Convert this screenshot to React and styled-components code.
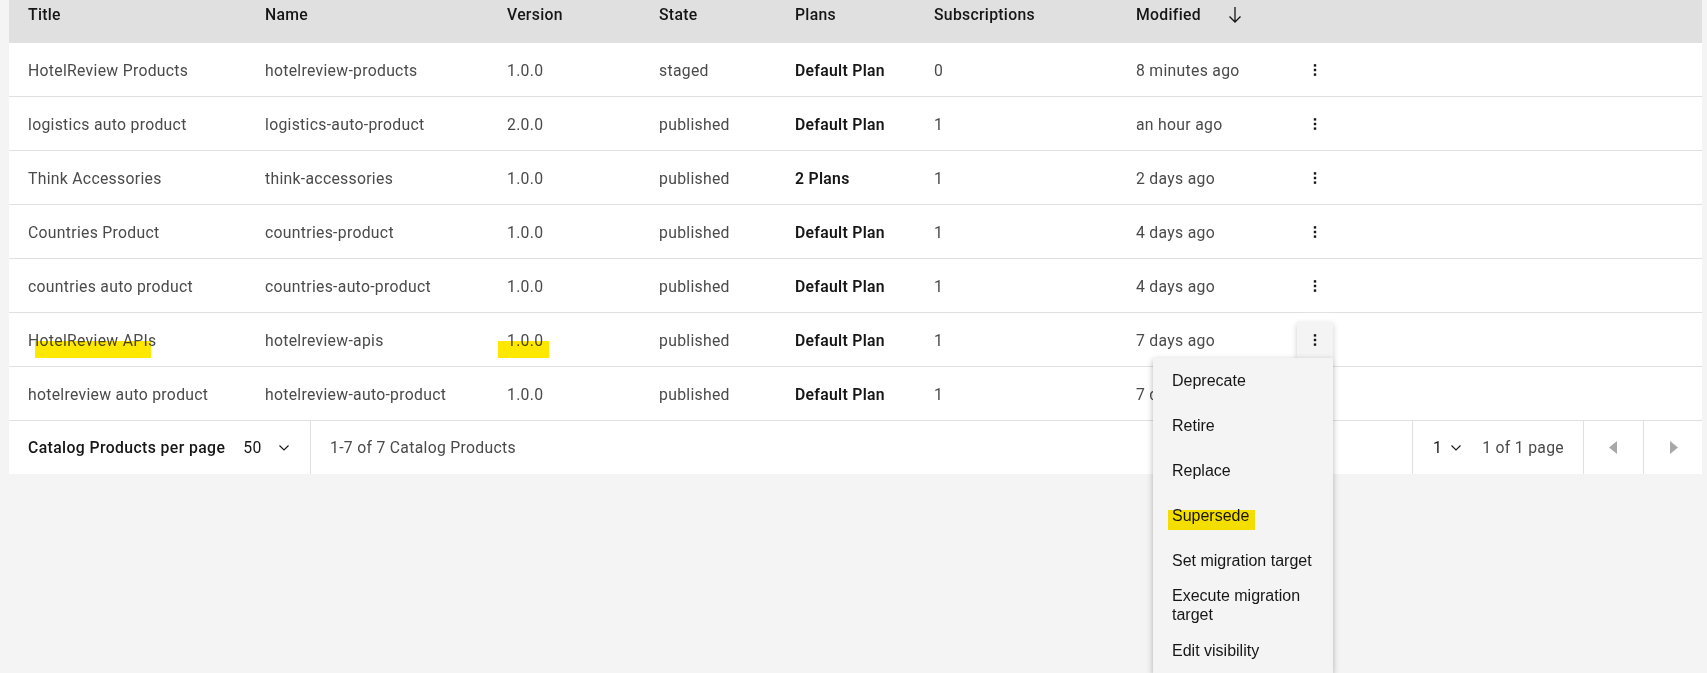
import React from 'react';
import styled, { createGlobalStyle } from 'styled-components';

const GlobalStyle = createGlobalStyle`
  html, body {
    margin: 0;
    padding: 0;
    background: #f4f4f4;
  }
  * { box-sizing: border-box; }
`;

const COLS = '237px 242px 152px 136px 139px 202px 180px 36px 1fr';

const products = [
  { title: 'HotelReview Products', name: 'hotelreview-products', version: '1.0.0', state: 'staged', plans: 'Default Plan', subs: '0', modified: '8 minutes ago' },
  { title: 'logistics auto product', name: 'logistics-auto-product', version: '2.0.0', state: 'published', plans: 'Default Plan', subs: '1', modified: 'an hour ago' },
  { title: 'Think Accessories', name: 'think-accessories', version: '1.0.0', state: 'published', plans: '2 Plans', subs: '1', modified: '2 days ago' },
  { title: 'Countries Product', name: 'countries-product', version: '1.0.0', state: 'published', plans: 'Default Plan', subs: '1', modified: '4 days ago' },
  { title: 'countries auto product', name: 'countries-auto-product', version: '1.0.0', state: 'published', plans: 'Default Plan', subs: '1', modified: '4 days ago' },
  { title: 'HotelReview APIs', name: 'hotelreview-apis', version: '1.0.0', state: 'published', plans: 'Default Plan', subs: '1', modified: '7 days ago', open: true },
  { title: 'hotelreview auto product', name: 'hotelreview-auto-product', version: '1.0.0', state: 'published', plans: 'Default Plan', subs: '1', modified: '7 days ago' },
];

const menuItems = ['Deprecate', 'Retire', 'Replace', 'Supersede', 'Set migration target', 'Execute migration target', 'Edit visibility'];

const Page = styled.div`
  min-height: 100vh;
  background: #f4f4f4;
  padding: 0 5px 0 9px;
  font-family: Roboto, "Noto Sans", sans-serif;
  font-size: 15.75px;
  letter-spacing: 0.3px;
`;

const Table = styled.div`
  background: #fff;
`;

const HeadRow = styled.div`
  display: grid;
  grid-template-columns: ${COLS};
  height: 42px;
  background: #e0e0e0;
`;

const HeadCell = styled.div`
  padding: 5px 0 0 19px;
  line-height: 20px;
  font-weight: 500;
  color: #161616;
  display: flex;
  gap: 26px;
`;

const Row = styled.div`
  display: grid;
  grid-template-columns: ${COLS};
  height: 54px;
  border-top: 1px solid #e0e0e0;
  align-items: center;
`;

const Cell = styled.div`
  padding-left: 19px;
  padding-top: 2px;
  line-height: 20px;
  color: ${p => (p.$bold ? '#161616' : '#4a4a4a')};
  font-weight: ${p => (p.$bold ? 600 : 400)};
  white-space: nowrap;
`;

const Marked = styled.span`
  position: relative;
  display: inline-block;
`;

const Highlight = styled.span`
  position: absolute;
  left: ${p => p.$left}px;
  top: ${p => p.$top}px;
  width: ${p => p.$width}px;
  height: ${p => p.$height}px;
  background: #ffe800;
  mix-blend-mode: multiply;
  pointer-events: none;
`;

const ActionCell = styled.div`
  position: relative;
  height: 36px;
`;

const Kebab = styled.button`
  width: 36px;
  height: 36px;
  border: 0;
  padding: 0;
  display: flex;
  align-items: center;
  justify-content: center;
  background: ${p => (p.$open ? '#f4f4f4' : 'transparent')};
  box-shadow: ${p => (p.$open ? '0 2px 6px rgba(0,0,0,0.2)' : 'none')};
  cursor: pointer;
`;

const Menu = styled.ul`
  position: absolute;
  z-index: 10;
  top: 36px;
  right: 0;
  width: 180px;
  margin: 0;
  padding: 0;
  list-style: none;
  background: #f4f4f4;
  box-shadow: 0 2px 6px rgba(0, 0, 0, 0.3);
  font-family: "Liberation Sans", Arial, sans-serif;
  font-size: 16px;
  letter-spacing: 0;
  color: #161616;
`;

const MenuItem = styled.li`
  height: 45px;
  display: flex;
  align-items: center;
  padding: 0 18px 0 19px;
  line-height: 19px;
`;

const Footer = styled.div`
  display: flex;
  align-items: stretch;
  height: 54px;
  border-top: 1px solid #e0e0e0;
  background: #fff;
  color: #161616;
  white-space: nowrap;
`;

const PerPage = styled.div`
  display: flex;
  align-items: center;
  padding-left: 19px;
  width: 302px;
  border-right: 1px solid #e0e0e0;
`;

const PerPageLabel = styled.span`
  font-weight: 500;
  letter-spacing: 0.4px;
  margin-right: 18px;
`;

const SelectValue = styled.span`
  display: flex;
  align-items: center;
  gap: ${p => p.$gap}px;
`;

const Range = styled.div`
  flex: 1;
  display: flex;
  align-items: center;
  padding-left: 19px;
  color: #4a4a4a;
`;

const PageSelect = styled.div`
  flex-shrink: 0;
  display: flex;
  align-items: center;
  border-left: 1px solid #e0e0e0;
  padding: 0 19px 0 20px;
`;

const PageInfo = styled.span`
  color: #4a4a4a;
  margin-left: 20px;
`;

const NavButton = styled.div`
  flex-shrink: 0;
  width: ${p => p.$w}px;
  border-left: 1px solid #e0e0e0;
  display: flex;
  align-items: center;
  justify-content: center;
`;

const Chevron = () => (
  <svg width="12" height="8" viewBox="0 0 12 8">
    <path d="M1.5 1.5 L6 6 L10.5 1.5" fill="none" stroke="#161616" strokeWidth="1.1" />
  </svg>
);

const Caret = ({ dir }) => (
  <svg width="9" height="13" viewBox="0 0 9 13">
    <path d={dir === 'left' ? 'M8 0 L0 6.5 L8 13 Z' : 'M1 0 L9 6.5 L1 13 Z'} fill="#a8a8a8" />
  </svg>
);

const SortArrow = () => (
  <svg width="16" height="18" viewBox="0 0 16 18" style={{ marginTop: 1 }}>
    <path d="M8 1 V16 M2.5 10.5 L8 16 L13.5 10.5" fill="none" stroke="#161616" strokeWidth="1.3" />
  </svg>
);

const Dots = () => (
  <svg width="4" height="14" viewBox="0 0 4 14">
    <rect x="0.8" y="1.2" width="2.4" height="2.4" fill="#161616" />
    <rect x="0.8" y="5.8" width="2.4" height="2.4" fill="#161616" />
    <rect x="0.8" y="10.4" width="2.4" height="2.4" fill="#161616" />
  </svg>
);

const headers = ['Title', 'Name', 'Version', 'State', 'Plans', 'Subscriptions'];

export default function App() {
  return (
    <>
      <GlobalStyle />
      <Page>
        <Table>
          <HeadRow>
            {headers.map(h => <HeadCell key={h}>{h}</HeadCell>)}
            <HeadCell>Modified <SortArrow /></HeadCell>
            <div />
            <div />
          </HeadRow>
          {products.map((p, i) => (
            <Row key={i}>
              <Cell>
                {p.open ? (
                  <Marked>{p.title}<Highlight $left={7} $top={10} $width={116} $height={17} /></Marked>
                ) : p.title}
              </Cell>
              <Cell>{p.name}</Cell>
              <Cell>
                {p.open ? (
                  <Marked>{p.version}<Highlight $left={-9} $top={10} $width={51} $height={17} /></Marked>
                ) : p.version}
              </Cell>
              <Cell>{p.state}</Cell>
              <Cell $bold>{p.plans}</Cell>
              <Cell>{p.subs}</Cell>
              <Cell>{p.modified}</Cell>
              <ActionCell>
                <Kebab $open={p.open}><Dots /></Kebab>
                {p.open && (
                  <Menu>
                    {menuItems.map(m => (
                      <MenuItem key={m}>
                        {m === 'Supersede' ? (
                          <Marked>{m}<Highlight $left={-4} $top={4} $width={87} $height={20} /></Marked>
                        ) : m}
                      </MenuItem>
                    ))}
                  </Menu>
                )}
              </ActionCell>
              <div />
            </Row>
          ))}
          <Footer>
            <PerPage>
              <PerPageLabel>Catalog Products per page</PerPageLabel>
              <SelectValue $gap={16}>50 <Chevron /></SelectValue>
            </PerPage>
            <Range>1-7 of 7 Catalog Products</Range>
            <PageSelect>
              <SelectValue $gap={8}>1 <Chevron /></SelectValue>
              <PageInfo>1 of 1 page</PageInfo>
            </PageSelect>
            <NavButton $w={60}><Caret dir="left" /></NavButton>
            <NavButton $w={59}><Caret dir="right" /></NavButton>
          </Footer>
        </Table>
      </Page>
    </>
  );
}
